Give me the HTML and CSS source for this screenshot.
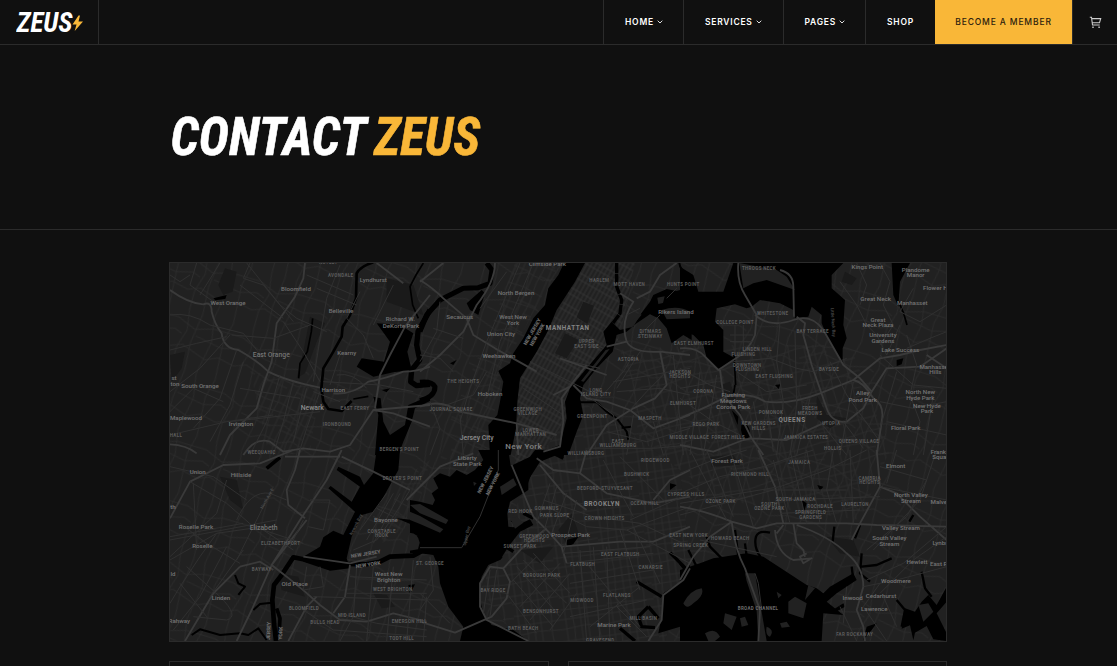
FILE: index.html
```html
<!DOCTYPE html>
<html lang="en">
<head>
<meta charset="utf-8">
<title>Contact Zeus</title>
<link rel="stylesheet" href="styles.css">
</head>
<body>
<header class="header">
  <a class="logo" aria-label="Zeus">
    <svg width="68" height="32" viewBox="0 -4 68 32"><text class="display" x="0.500" y="20.500" font-size="27" textLength="56" lengthAdjust="spacingAndGlyphs" fill="#fff">ZEUS</text><path d="M62.500 4.500L56.500 13.500h4l-1.800 6.500L67 10.500h-4.500l1.500-6z" fill="#f9b738"/></svg>
  </a>
  <nav class="nav">
    <a class="nav-item home">HOME<svg class="chev" viewBox="0 0 6 4"><path d="M.7.7L3 3 5.300.7"/></svg></a>
    <a class="nav-item services">SERVICES<svg class="chev" viewBox="0 0 6 4"><path d="M.7.7L3 3 5.300.7"/></svg></a>
    <a class="nav-item pages">PAGES<svg class="chev" viewBox="0 0 6 4"><path d="M.7.7L3 3 5.300.7"/></svg></a>
    <a class="nav-item shop">SHOP</a>
    <a class="member">BECOME A MEMBER</a>
    <a class="cart" aria-label="Cart"><svg width="13" height="13" viewBox="0 0 13 13"><path d="M.8 1.200h1.700l1 7.800h7.200M2.700 2.600h9l-1.200 4.200H3.400"/><path d="M3.300 11.200h1.400M9.400 11.200h1.400" stroke-width="1.500"/></svg></a>
  </nav>
</header>
<section class="hero">
  <h1 class="title"><svg width="330" height="76" viewBox="-4 -8 330 76"><text class="display" x="0.500" y="45" font-size="53.500" textLength="196" lengthAdjust="spacingAndGlyphs" fill="#fff" stroke="#fff" stroke-width=".6">CONTACT</text><text class="display" x="204" y="45" font-size="53.500" textLength="106" lengthAdjust="spacingAndGlyphs" fill="#f9b738" stroke="#f9b738" stroke-width=".6">ZEUS</text></svg></h1>
</section>
<main class="content">
  <div class="map">
  <svg viewBox="170 263 776 378" preserveAspectRatio="none">
    <defs>
      <pattern id="wander" width="67" height="59" patternUnits="userSpaceOnUse" patternTransform="rotate(18)"><path class="minor" d="M8 0L12 20 7 39 8 59M22 0L19 31 22 59M34 0L39 24 34 59M54 0L50 19 54 59M0 10L19 17 37 11 67 10M0 40L12 35 38 43 50 37 67 40M22 23L50 27 67 22M0 22L8 25"/></pattern>
      <pattern id="blocks" width="53" height="61" patternUnits="userSpaceOnUse" patternTransform="rotate(-14)"><path class="minor" d="M6 0L8 31 6 61M16 0V61M27 0L25 30 27 61M42 0L45 34 42 61M0 5H53M0 18L26 20 53 18M0 29L16 27 53 29M0 43L25 46 53 43M0 53H28M45 34L53 35"/></pattern>
      <pattern id="streets" width="20" height="17" patternUnits="userSpaceOnUse" patternTransform="rotate(29.500)"><path class="minor dense" d="M1 0V17M5 0V17M9 0V17M13 0V17M17 0V17M0 3H20M0 9H20"/></pattern>
      <pattern id="brook" width="47" height="52" patternUnits="userSpaceOnUse" patternTransform="rotate(-8)"><path class="minor" d="M4 0V52M10 0L12 26 10 52M19 0V52M26 0V52M38 0L36 29 38 52M0 6L47 8M0 16H47M0 26L22 24 47 26M0 38H47M0 46L47 44"/></pattern>
      <pattern id="heights" width="35" height="41" patternUnits="userSpaceOnUse" patternTransform="rotate(24)"><path class="minor" d="M4 0V41M10 0L12 20 10 41M19 0V41M27 0V41M0 8L19 10 35 8M0 22H27M10 33H35"/></pattern>
    </defs>
    <path fill="#212121" d="M170 263h777v378H170z"/>
    <path fill="url(#wander)" d="M170 263h777v378H170z"/>
    <path fill="url(#heights)" d="M515 263L490 330 450 420 440 460 485 455 505 365 560 263zM400 480l30-20-15 60-35 25zM250 370l70 20-10 60-40 10z"/>
    <path class="land" d="M515 466L518 380 585 263H635L618 340 577 385 562 452z"/>
    <path fill="url(#streets)" d="M515 466L518 380 585 263H635L618 340 577 385 562 452z"/>
    <path class="land" d="M530 470L580 400 640 440 680 470 690 560 665 641H520L480 590 500 550z"/>
    <path fill="url(#brook)" d="M530 470L580 400 640 440 680 470 690 560 665 641H520L480 590 500 550z"/>
    <path fill="url(#blocks)" d="M620 350L700 345 850 345 890 450 860 520 720 500 640 440z"/>

    <g class="park">
      <g class="nw"><path d="M195 40l35 10-12 60-28 10-15-30zM450 185l45 20-25 55-35 95-25 15 20-80zM30 300l45-10-10 50-30 40zM680 70l80 20 30 90-110-40z"/></g>
      <g class="n"><path d="M490 140l32 12-20 55-32-20zM435 235l40 20-35 55-35-15z"/></g>
      <g class="ne"><path d="M120 390l30-10 55 160-18 15-40-90zM410 420l30 60 60 10-50 30-40-30zM495 50l35 20-15 20-30-10z"/></g>
      <g class="s"><path d="M455 190l25 70-35 30-30-50zM300 300l100-10-40 50z"/></g>
      <g class="sw"><path d="M180 80l50 10 20 90-40-30zM355 370l60 10 20 60-70-20zM640 430l40 5 25 35-40 5z"/></g>
      <g class="se"><path d="M90 20l70-5 20 30-85 5zM440 260l80 10 20 50-60-10z"/></g>
    </g>

    <g class="water">
      <g class="nw">
        <path class="line" stroke-width="8" d="M640 22Q600 35 590 55L588 130 570 180 548 215 545 245 520 290 490 340 484 400 490 440 505 462 545 468 575 438"/>
        <path class="line" stroke-width="5" d="M790 24L768 60 750 95 758 150 775 190M580 432l45-8M458 190l-4 40-12 60-22 35-4 45"/>
        <path class="line" stroke-width="16" d="M810 165L774 230 770 270 779 315 755 345 752 380 770 392 810 388"/>
        <path d="M650 205L720 210 760 235 742 290 755 345 700 352 640 365 590 335 605 310 672 320 690 260zM640 425L662 430 670 500 690 540 735 510 745 450 810 422V438L765 460 755 500 730 560 715 600H645L655 480zM160 130l40-10-4 12-30 4zM665 405l25-5-10 12z"/>
      </g>
      <g class="n">
        <path class="line" stroke-width="15" d="M200 24L216 45 210 85 175 98 130 100 60 135 20 180 0 230M0 382Q35 378 45 395 45 425 0 437"/>
        <path d="M432 24L415 60 385 100 375 150 340 190 310 250 280 295 270 325 235 348 250 380 240 440 232 480 205 510 210 600H272L288 520 292 440 300 370 350 290 385 225 410 165 465 80 495 24zM140 145l45-40 10 10-20 65-25-15zM90 325l20-10-10 15z"/>
        <path class="line" stroke-width="10" stroke-dasharray="30 2" d="M590 24V95L605 135 600 175 575 210"/>
        <path d="M550 230L575 200 600 225 640 215 660 180 690 140 700 120 740 102 770 108 790 102 815 125V255L790 240 755 265 740 220 715 190 690 178 650 205 620 230 590 240 578 290 530 340 490 390 480 430 490 480 470 530 445 600H340L420 570 440 490 435 440 450 400 500 340 560 270z"/>
        <path class="line" stroke-width="6" d="M480 442L530 442 560 470 590 490 605 510 620 530 625 555M605 518l30-3M778 24q2 25 30 33"/>
      </g>
      <g class="ne">
        <path d="M0 35L40 60 55 110 130 110 160 24H490L455 60 455 100 495 135 490 210 500 250 488 280 488 330 460 280 440 240 425 205 425 180 395 155 385 185 345 190 340 165 300 145 240 135 215 155 200 160 165 148 110 160 105 200 130 225 130 290 165 310 118 345 80 310 70 270 40 240 0 225zM635 24H690L660 80 655 155 640 120zM650 315l20-5-5 18-15 5zM285 390l16-2-5 14zM155 465l20 20-2 25zM185 500q30 10 24 45-20 15-26-20z"/>
        <path class="line" stroke-width="5" d="M656 140l15 35 10 35M162 300l5 90M165 390l-5 30"/>
      </g>
      <g class="sw">
        <path d="M650 0H720L715 60 660 160 640 185 605 195 575 260 560 325 570 355 510 362 430 335 430 320 480 290 490 262 520 242 550 255 585 185 505 115 512 108 575 155 600 110 530 60 535 50 600 80 612 105 640 70zM710 205L760 210 810 230V295L770 300 785 260 770 230zM750 180l60-5v30zM745 405l20-2-15 30z"/>
        <path class="line" stroke-width="14" d="M500 342L400 322 365 375 342 405 337 450 342 520 348 573M560 342L620 343 660 335 690 320 760 317 810 290"/>
        <path class="line" stroke-width="11" d="M320 55L360 22M350 475l10 30-3 50"/>
        <path class="line" stroke-width="6" d="M95 555L120 538 180 555 240 550 265 555 295 535 320 570M225 375l10 25 20 10-20 25M280 480l20-18 35-4"/>
      </g>
      <g class="s">
        <path d="M175 0H265L272 48 330 20 345 0H440L430 20 410 15 360 35 325 90 325 120 270 155 262 190 265 230 280 232 330 208 340 225 300 245 265 290 240 330 205 345 185 380 178 440 190 490 215 525 280 540 325 573H120L130 530 85 470 60 400 55 350 40 315 0 310 -30 310V150L0 155 38 165 45 150 35 130 55 115 40 85 60 70 90 80 110 60 140 75 165 60 190 30z"/>
        <path class="line" stroke-width="10" d="M340 40l-25 70M310 190l30 15M275 210l40 25M250 285l30 20M225 310l20 15M400 10l30 15M650 395l75 45M750 308l50 50M600 535l45 38M685 470l30 35M685 470l-30 30 10 30 40 3"/>
        <path d="M440 270l35-10-15 22-18 8zM810 340L790 390 730 430 725 500 715 550 780 530 785 573H810zM750 100l20 5-20 15z"/>
      </g>
      <g class="se">
        <path d="M0 360L60 340 100 325 200 310 250 320 380 405 410 415 430 430 450 410 520 370 530 390 470 430 440 455 490 495 430 490 425 573H0z"/>
        <path class="line" stroke-width="7" d="M270 248Q235 240 228 260 220 290 242 322M515 350l5 40M165 240l10 80M80 260l10 30 35 35M195 280l5 40M25 300l25 50M545 310L540 370 570 395M545 350l45-5 45-20M463 230l-5 45M540 225l-15 40M700 195l-12 20M725 365l10 50 20 25M650 450l25 30-10 50M0 340l30 40"/>
        <path d="M675 475l30 10 20-30 20-20 25 30 30-55v45l-30 35 30 60v23l-40-5-20-40-35 20-5 23-10-45-25 10zM560 530l30-10-15 20-25 30zM365 150l15 10-8 25zM412 105l18 5-10 12zM450 485l40-25 5 10-35 20z"/>
      </g>
    </g>

    <g class="land">
      <g class="n"><path d="M557 285l12-3-78 98-8-2zM625 212l32-37 8 4-30 36zM712 128l22-4-5 20-14 3zM725 165q50-15 85 5v20l-70 3z"/></g>
      <g class="ne"><path d="M178 24L290 45 320 65 345 105 260 75 220 85 190 100zM0 0h40l-20 25z"/></g>
      <g class="s"><path d="M-30 165L0 162 85 210 78 222 0 190zM-30 185L0 198 70 238 60 248 0 222 -30 210zM240 110l40-25 10 20-45 30zM160 95l10 5-8 8zM270 205l20-5 20 18-25 18z"/><path d="M-31 248q25 0 30 30l-5 20-30 5z"/></g>
      <g class="se"><path d="M10 460q20-40 55-45 10 20-25 45-20 20-30 0zM135 490l35 10-15 40-25-20zM75 550q30-20 45 10l-15 13H85zM180 505l15-5 10 25-20 5zM260 530q25 10 10 30-15-5-10-30zM325 455l20-15 35 20-10 45-45-15zM300 520l20-5 10 15-25 3zM290 425l15 10-10 10zM195 370l30 0 35 203h-25l-5-90-30-90zM715 465l30-5 15 25-30 30zM385 405l20 10-30 35z"/></g>
    </g>

    <g class="roads">
      <g class="nw">
        <path class="mid" d="M30 105Q85 145 130 148 155 138 155 170 165 210 185 235 190 280 235 285 290 315 325 350 380 378 480 398M435 24L430 70 405 125 350 205 335 320 310 390 290 460 210 540 180 600M650 24L730 85M810 120L735 215 690 300 660 360 645 460M30 568Q80 570 110 595M250 600Q285 545 330 560L370 590 430 580 510 590 570 570 640 465 700 475 810 515M640 465L810 450M520 415Q580 420 625 380 680 370 730 350 770 350 810 335"/>
        <path d="M30 180Q90 170 150 210L250 235 310 310M110 24L90 90 160 140M180 24L120 120M270 24L250 70 310 90 360 150 410 190 500 230M30 285L110 265 200 245M540 30L500 130 480 250 460 380M600 110L560 190 610 240 640 310M700 90L640 210M30 410L120 340 210 240M215 240L340 250 450 210M370 200L430 290 480 380M30 470L100 400 190 440M230 285L180 430 100 520M250 320L210 450 150 560M360 360L320 500 270 600M400 380L370 500 340 600M440 400L400 560M480 410L440 520 415 600M460 410L540 440M240 400L420 430M210 500L480 470M30 540L200 500 340 480M530 360Q580 350 620 400M490 380L660 390 760 410M540 300L510 390M30 60L60 80 90 60M470 100L590 150M440 60L580 120M240 90L370 190M260 24L400 200"/>
      </g>
      <g class="n">
        <path class="mid" d="M0 75Q40 100 70 130L140 190 160 240 225 280 350 350M225 24Q225 80 170 150L130 230 60 300 0 350M0 455Q60 430 120 470L290 505 410 540M460 390L500 430 560 440 630 465 700 520 810 480M450 395L400 420M770 24L720 60 690 110 650 130M560 275L620 260Q600 200 640 140L600 115M620 260Q640 295 720 290L810 300M720 290L740 390 705 430 640 460 560 510 500 600M0 80L70 24"/>
        <path d="M300 24L200 260 150 400 120 500M340 24L240 260 200 430M260 50L180 160M0 300L60 310 100 350M60 140L50 230 0 320M30 440L60 520 30 600M80 450L160 420 200 350M120 480L130 600M40 220L130 250M580 380L810 340M590 410L720 400 810 420M630 465L680 410 740 350M540 430L610 350 640 300M500 420L580 480 600 560M560 530L680 560 810 520M640 480L620 600M700 500L730 600M760 300L790 600M650 250L720 180M520 580L700 580 810 570M660 290L590 400M620 180L660 160M740 130L770 100M330 320L510 410M400 210L550 280M310 400L430 480M410 310L540 340"/>
        <path class="mid" d="M290 505L295 600M370 590L420 575 430 500 425 430 460 380 500 330M420 310L560 360"/>
      </g>
      <g class="ne">
        <path class="mid" d="M175 24Q170 80 195 120L230 180 225 240Q205 290 160 315L115 345 75 305Q50 275 0 280M300 45Q340 55 340 95L342 185M225 180Q270 220 340 195 395 175 430 225L490 330 540 370 575 410 550 460 500 500Q455 505 440 460L395 330 370 240 375 205 350 185M0 490L80 455 150 420Q220 415 255 440 330 450 420 415L520 375 600 310 660 300 720 285 800 270M520 375Q550 380 580 430 615 450 605 500L590 600M575 410L620 340 720 335 800 280M120 345L130 420 180 480 215 550 250 600M215 550L320 555 440 500M0 570L100 590 190 555 215 550M740 300L800 340"/>
        <path d="M480 80L530 150 560 210 590 240 620 300M530 24L560 90 540 150M600 24L630 80 610 150 640 210 600 270M700 100L660 170 720 200 800 150M680 240L710 330 690 420 720 500 700 600M800 230L750 250 680 280M600 300L700 390 800 400M600 440L700 460 800 440M620 500L800 540M650 350L600 520M760 420L730 600M160 320L270 310 350 340 400 350 500 310M170 350L260 410 380 390M300 200L290 320 310 440 290 600M345 230L350 450 330 600M0 340L90 390 150 410M0 430L100 500 180 540M60 350L30 600M110 360L70 600M0 520L120 500M0 400L110 380M220 440L240 550M260 440L280 590M390 430L350 600M420 500L500 600M490 500L550 580M520 380L480 600M450 320L500 420 600 560M150 240H220M150 260H220M165 210V290M190 210V290M660 210L620 300"/>
      </g>
      <g class="sw">
        <path class="mid" d="M230 573L275 480 335 345 420 210 500 90 545 0M545 20L640 65 750 120M420 0L405 60 380 120 385 165 435 205M30 205L90 95 190 45 300 40 400 0M375 20H540M440 210L385 280 335 345 380 380 435 425 480 465 540 510 620 515 700 490 800 515M240 350L300 335 340 360M385 573L440 470 470 440M240 350L160 430 75 573M430 320L570 340 650 320M570 345L555 440 520 490M740 150L810 80"/>
        <path d="M90 95L200 160 280 230 430 280M30 50L160 80 260 150M30 260L250 220M30 270L350 210M30 330L170 250 310 230M170 250L120 320 60 410 30 460M60 220L140 280 240 340M230 210Q270 120 330 130L380 150M340 110L300 190 230 330M200 90L170 190 30 320M100 100L110 300M430 210L390 290M200 290L120 440 40 540M250 300L150 440M310 240L400 300M80 350L180 440Q240 500 200 510L100 500M60 400L140 500M450 150L510 150 490 240 445 230M680 130L600 240M700 130L620 270M720 130L640 280M750 120L700 200 650 270 580 300M650 175L700 200M640 200L690 220M590 350L580 500 540 573M640 350L620 573M700 350L680 573M760 330L740 573M570 380L800 390M560 430L800 430M540 490L650 520 800 540M440 350L430 420 490 410 480 350M430 480L520 540 800 560M460 440L800 450"/>
      </g>
      <g class="s">
        <path class="mid" d="M0 515L105 548 215 500 260 445 270 395 250 355 210 350 180 400 180 470 200 510 240 530 325 573M275 45L340 200 385 245 425 290 440 340M250 355L310 290 380 235M0 110L60 50 160 10M350 25L400 60 480 70 500 0M425 290L600 275 700 275 810 230M480 70L560 130 700 160 810 140M700 150L750 90 810 60M810 355L790 390 730 435 725 510 685 573M360 45L430 130 500 180"/>
        <path d="M235 0V60L180 200 125 293H0M390 100L350 220M410 110L370 250M440 130L395 250M470 150L430 310M370 150L520 200 660 220 810 290M380 170L500 230 620 240 810 340M290 350L420 500M310 330L440 460M340 310L450 430M280 390L400 530M260 430L350 550M270 400L350 320M300 470L420 340M330 510L450 370M390 540L470 430M480 300L500 573M520 290L540 573M560 290L570 573M600 240L660 420M640 230L720 400M430 310L690 290M440 340L700 310M450 400L700 360M450 500L680 450M500 340L660 530M510 530L660 410M600 20L740 160M550 30L640 200M630 210L810 130M620 240L810 170M210 360L190 490M230 360L210 500M190 420L260 430M0 430L90 520M30 320L40 420 0 480M20 440L10 573M590 470L680 560"/>
      </g>
      <g class="se">
        <path class="mid" d="M235 0L285 110 310 220M0 170Q70 180 155 215L230 235 290 220 500 220 590 225 800 230M155 215L90 260 40 320 0 390M155 215Q165 300 195 355L240 480 235 573M590 0L600 110 540 220 515 270M600 110L650 130 720 200 800 270M350 225Q450 260 500 310 550 350 550 410L530 480 550 530 555 573M285 240Q290 310 340 330L395 325 370 340 360 320 380 310M310 225L290 250M340 220L350 280 370 300 375 320"/>
        <path d="M0 70L100 30 200 0M0 130L120 80 250 50 400 0M0 160L300 110 440 60 560 0M0 195L280 120M30 0L140 210M80 0L160 200M150 0L220 230M280 30L330 220M330 0L380 220M380 0L420 220M460 0L440 120 470 220M510 0L520 220M250 120H500M300 150L600 140M300 190L540 180M600 50L740 90 680 200 560 300M770 0L720 150 580 300M650 0L620 100M600 110L800 150M800 230L670 340 560 390M800 260L700 330 600 430M550 410L650 390 800 350M480 470L530 573M600 400L550 470 620 573M500 410L490 520M610 440L650 530M290 320L60 270M225 370L235 400 245 480"/>
      </g>
    </g>

    <g class="labels">
      <g class="nw">
        <text x="505" y="26">NUTLEY</text><text x="542" y="65">AVONDALE</text><text x="585" y="466">EAST FERRY</text><text x="531" y="514">IRONBOUND</text><text x="718" y="588">BERGEN'S POINT</text><text x="305" y="596">WEEQUAHIC</text><text x="48" y="547">HALL</text>
        <g class="town"><text x="640" y="81">Lyndhurst</text><text x="408" y="107">Bloomfield</text><text x="204" y="149">West Orange</text><text x="543" y="173">Belleville</text><text x="721" y="199">Richard W.</text><text x="723" y="218">DeKorte Park</text><text x="560" y="300">Kearny</text><text x="334" y="306" class="city">East Orange</text><text x="120" y="399">South Orange</text><text x="520" y="410">Harrison</text><text x="78" y="494">Maplewood</text><text x="243" y="512">Irvington</text><text x="45" y="393">ton</text><text x="42" y="374">st</text><text x="457" y="466" class="city strong">Newark</text></g>
      </g>
      <g class="n">
        <text x="538" y="82">HARLEM</text><text x="628" y="94">MOTT HAVEN</text><text x="790" y="92">HUNTS POINT</text><text x="500" y="265">UPPER</text><text x="500" y="278">EAST SIDE</text><text x="691" y="235">DITMARS</text><text x="691" y="248">STEINWAY</text><text x="625" y="318">ASTORIA</text><text x="822" y="270">EAST ELMHURST</text><text x="780" y="357">JACKSON</text><text x="780" y="370">HEIGHTS</text><text x="130" y="384">THE HEIGHTS</text><text x="528" y="410">LONG</text><text x="528" y="423">ISLAND CITY</text><text x="93" y="469">JOURNAL SQUARE</text><text x="323" y="468">GREENWICH</text><text x="323" y="480">VILLAGE</text><text x="517" y="489">GREENPOINT</text><text x="690" y="495">MASPETH</text><text x="789" y="451">ELMHURST</text><text x="332" y="530">LOWER</text><text x="332" y="543">MANHATTAN</text><text x="594" y="564">EAST</text><text x="594" y="577">WILLIAMSBURG</text><text x="498" y="601">WILLIAMSBURG</text><text transform="translate(341 233) rotate(-60)" class="state">NEW JERSEY</text><text transform="translate(356 242) rotate(-60)" class="state">NEW YORK</text>
        <g class="town"><text x="382" y="33">Cliffside Park</text><text x="288" y="120">North Bergen</text><text x="119" y="193">Secaucus</text><text x="279" y="193">West New</text><text x="279" y="210">York</text><text x="243" y="244">Union City</text><text x="237" y="310">Weehawken</text><text x="210" y="423">Hoboken</text><text x="768" y="176">Rikers Island</text><text x="170" y="556" class="city strong">Jersey City</text><text x="311" y="582" class="capital">New York</text></g>
        <text x="443" y="226" class="borough">MANHATTAN</text>
      </g>
      <g class="ne">
        <text x="237" y="46">THROGS NECK</text><text x="278" y="179">WHITESTONE</text><text x="165" y="208">COLLEGE POINT</text><text x="398" y="233">BAY TERRACE</text><text x="232" y="287">LINDEN HILL</text><text x="190" y="302">FLUSHING</text><text x="202" y="336">DOWNTOWN</text><text x="202" y="349">FLUSHING</text><text x="447" y="347">BAYSIDE</text><text x="283" y="370">EAST FLUSHING</text><text x="70" y="415">CORONA</text><text x="273" y="478">POMONOK</text><text x="390" y="466">FRESH</text><text x="390" y="479">MEADOWS</text><text x="78" y="512">REGO PARK</text><text x="236" y="511">KEW GARDENS</text><text x="236" y="524">HILLS</text><text x="454" y="511">UTOPIA</text><text x="28" y="553">MIDDLE VILLAGE</text><text x="145" y="551">FOREST HILLS</text><text x="378" y="552">JAMAICA ESTATES</text><text x="537" y="564">QUEENS VILLAGE</text><text x="458" y="584">HOLLIS</text><text class="bay" transform="translate(455 202) rotate(86)">Little Neck Bay</text>
        <g class="town"><text x="562" y="41">Kings Point</text><text x="707" y="51">Plandome</text><text x="707" y="67">Manor</text><text x="773" y="104">Flower Hill</text><text x="587" y="138">Great Neck</text><text x="697" y="151">Manhasset</text><text x="594" y="200">Great</text><text x="594" y="216">Neck Plaza</text><text x="609" y="247">University</text><text x="609" y="263">Gardens</text><text x="661" y="292">Lake Success</text><text x="764" y="341">Manhasset</text><text x="766" y="357">Hills</text><text x="160" y="425">Flushing</text><text x="160" y="443">Meadows</text><text x="160" y="461">Corona Park</text><text x="548" y="421">Alley</text><text x="548" y="440">Pond Park</text><text x="721" y="418">North New</text><text x="721" y="434">Hyde Park</text><text x="741" y="459">New Hyde</text><text x="741" y="475">Park</text><text x="677" y="525">Floral Park</text></g>
        <text x="336" y="501" class="borough">QUEENS</text>
      </g>
      <g class="sw">
        <text x="727" y="91">DROYER'S POINT</text><text x="665" y="248">CONSTABLE</text><text x="665" y="261">HOOK</text><text x="362" y="285">ELIZABETHPORT</text><text x="305" y="362">BAYWAY</text><text x="698" y="422">WEST BRIGHTON</text><text x="432" y="479">BLOOMFIELD</text><text x="576" y="501">MID ISLAND</text><text x="495" y="522">BULLS HEAD</text><text x="748" y="520">EMERSON HILL</text><text x="725" y="569">TODT HILL</text><text transform="translate(618 317) rotate(-9)" class="state">NEW JERSEY</text><text transform="translate(625 349) rotate(-9)" class="state">NEW YORK</text><text transform="translate(331 543) rotate(-88)" class="state">JERSEY</text><text transform="translate(367 550) rotate(-88)" class="state">YORK</text><text transform="translate(592 226) rotate(-63)" class="bay">Newark Bay</text><text transform="translate(325 148) rotate(-61)" class="bay">North Ave E</text>
        <g class="town"><text x="113" y="71">Union</text><text x="243" y="81">Hillside</text><text x="108" y="236">Roselle Park</text><text x="127" y="295">Roselle</text><text x="311" y="240" class="city">Elizabeth</text><text x="678" y="216">Bayonne</text><text x="686" y="379">West New</text><text x="686" y="396">Brighton</text><text x="404" y="408">Old Place</text><text x="183" y="449">Linden</text><text x="58" y="519">Rahway</text><text x="39" y="177">th</text><text x="39" y="378">ld</text></g>
      </g>
      <g class="s">
        <text x="706" y="35">RIDGEWOOD</text><text x="650" y="77">BUSHWICK</text><text x="555" y="121">BEDFORD-STUYVESANT</text><text x="674" y="164">OCEAN HILL</text><text x="798" y="137">CYPRESS HILLS</text><text x="301" y="190">RED HOOK</text><text x="380" y="180">GOWANUS</text><text x="404" y="202">PARK SLOPE</text><text x="554" y="209">CROWN HEIGHTS</text><text x="343" y="263">GREENWOOD</text><text x="343" y="275">HEIGHTS</text><text x="300" y="293">SUNSET PARK</text><text x="806" y="261">EAST NEW YORK</text><text x="812" y="291">SPRING CREEK</text><text x="601" y="317">EAST FLATBUSH</text><text x="488" y="349">FLATBUSH</text><text x="692" y="356">CANARSIE</text><text x="30" y="344">ST. GEORGE</text><text x="365" y="382">BOROUGH PARK</text><text x="219" y="426">BAY RIDGE</text><text x="591" y="441">FLATLANDS</text><text x="486" y="456">MIDWOOD</text><text x="363" y="488">BENSONHURST</text><text x="670" y="510">MILL BASIN</text><text x="310" y="539">BATH BEACH</text><text x="541" y="576">GRAVESEND</text><text transform="translate(201 92) rotate(-63)" class="state">NEW JERSEY</text><text transform="translate(223 104) rotate(-63)" class="state">NEW YORK</text><text transform="translate(144 258) rotate(-77)" class="bay">Upper Bay</text>
        <g class="town"><text x="142" y="30">Liberty</text><text x="142" y="47">State Park</text><text x="452" y="260">Prospect Park</text><text x="582" y="532">Marine Park</text></g>
        <text x="546" y="169" class="borough">BROOKLYN</text>
      </g>
      <g class="se">
        <text x="358" y="42">JAMAICA</text><text x="210" y="77">RICHMOND HILL</text><text x="569" y="90">CAMBRIA</text><text x="569" y="103">HEIGHTS</text><text x="347" y="152">SOUTH JAMAICA</text><text x="122" y="159">OZONE PARK</text><text x="268" y="168">SOUTH</text><text x="268" y="181">OZONE PARK</text><text x="420" y="173">ROCHDALE</text><text x="525" y="168">LAURELTON</text><text x="392" y="193">SPRINGFIELD</text><text x="392" y="206">GARDENS</text><text x="151" y="271">HOWARD BEACH</text><text x="234" y="479" class="channel">BROAD CHANNEL</text><text x="524" y="557">FAR ROCKAWAY</text>
        <g class="town"><text x="141" y="39">Forest Park</text><text x="647" y="53">Elmont</text><text x="785" y="11">Franklin</text><text x="786" y="28">Square</text><text x="693" y="142">North Valley</text><text x="693" y="159">Stream</text><text x="790" y="163">Malverne</text><text x="663" y="239">Valley Stream</text><text x="628" y="271">South Valley</text><text x="628" y="288">Stream</text><text x="795" y="285">Lynbrook</text><text x="711" y="343">Hewlett</text><text x="786" y="349">East Roc</text><text x="648" y="400">Woodmere</text><text x="518" y="449">Inwood</text><text x="603" y="445">Cedarhurst</text><text x="583" y="483">Lawrence</text></g>
      </g>
    </g>
  </svg>
  </div>
  <div class="cards"><div class="card"></div><div class="card"></div></div>
</main>
</body>
</html>
```
FILE: styles.css
```css
* { box-sizing: border-box; }
html, body { height: 100%; }
body { display: flex; flex-direction: column; margin: 0; overflow: hidden; background: #101010; color: #fff; font-family: Inter, sans-serif; }
svg { display: block; }
.header { display: flex; flex: none; justify-content: space-between; height: 45px; border-bottom: 1px solid #2b2b2b; }
.logo { width: 99px; padding: 7px 0 0 16px; border-right: 1px solid #2b2b2b; }
.display { font-family: "Roboto Condensed", Roboto, sans-serif; font-weight: 700; font-style: italic; }
.nav { display: flex; font-size: 8.5px; font-weight: 600; letter-spacing: 0.76px; }
.nav-item { display: flex; align-items: center; padding-left: 21px; border-left: 1px solid #2b2b2b; }
.home { width: 80px; }
.services { width: 100px; }
.pages { width: 82px; padding-left: 20.5px; }
.shop { width: 70px; }
.chev { width: 6px; height: 4px; margin-left: 3px; fill: none; stroke: #ddd; stroke-width: 1; }
.member { display: flex; align-items: center; justify-content: center; width: 137px; background: #f9b738; color: #2c210d; font-weight: 500; letter-spacing: 0.85px; }
.cart { display: flex; align-items: center; justify-content: center; width: 45px; border-left: 1px solid #2b2b2b; }
.cart svg { fill: none; stroke: #ccc; stroke-width: 1.1; }
.hero { flex: none; height: 185px; padding: 57px 0 0 166px; border-bottom: 1px solid #2b2b2b; }
.title { margin: 0; }
.content { display: flex; flex: 1; flex-direction: column; width: 778px; min-height: 0; margin: 32px auto 0 169px; }
.map { flex: none; height: 380px; border: 1px solid #2b2b2b; overflow: hidden; }
.map svg { width: 100%; height: 100%; }
.cards { display: grid; flex: 1; grid-template-columns: 1fr 1fr; gap: 19px; margin-top: 19px; }
.card { border: 1px solid #2b2b2b; border-bottom: 0; }

/* Map tiles: each is drawn at three units per pixel */
.nw { transform: translate(160px, 255px) scale(0.33333); }
.n { transform: translate(420px, 255px) scale(0.33333); }
.ne { transform: translate(680px, 255px) scale(0.33333); }
.sw { transform: translate(160px, 450px) scale(0.33333); }
.s { transform: translate(420px, 450px) scale(0.33333); }
.se { transform: translate(680px, 450px) scale(0.33333); }
.land { fill: #212121; }
.park { fill: #1a1a1a; }
.water { fill: #000; }
.line { fill: none; stroke: #000; stroke-linejoin: round; }
.minor { fill: none; stroke: #2c2c2c; stroke-width: 0.8; }
.dense { stroke: #353535; }
.roads { fill: none; stroke: #303030; stroke-width: 3; stroke-linejoin: round; }
.roads .mid { stroke: #3a3a3a; stroke-width: 5.5; }
.labels { font-family: Roboto, sans-serif; font-size: 13.5px; font-weight: 700; letter-spacing: 1px; fill: #5c5c5c; text-anchor: middle; }
.labels .town { font-size: 18.5px; font-weight: 500; letter-spacing: 0; fill: #747474; }
.labels .city { font-size: 20.5px; }
.labels .strong { fill: #8c8c8c; }
.labels .capital { font-size: 24px; letter-spacing: 1px; font-weight: 600; fill: #7c7c7c; }
.labels .borough { font-size: 19px; font-weight: 700; letter-spacing: 1.6px; fill: #848484; }
.labels .state { font-size: 15.5px; font-weight: 900; letter-spacing: -0.3px; fill: #6a6a6a; }
.labels .bay { font-size: 13px; font-weight: 500; letter-spacing: 0; fill: #4c4c4c; }
.labels .channel { fill: #6c6c6c; }
```
